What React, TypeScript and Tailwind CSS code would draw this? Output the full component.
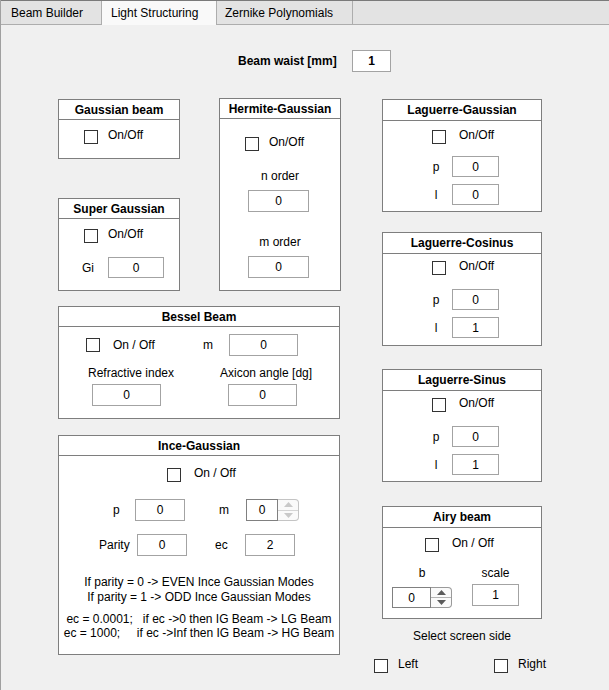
import React from "react";

function Cb() {
  return <span className="block w-[14px] h-[14px] border border-[#333333] bg-white shrink-0" />;
}

function CheckRow({ label, gap }: { label: string; gap: string }) {
  return (
    <div className="flex items-start">
      <Cb />
      <span className={`${gap} -mt-[2px] leading-[14px] whitespace-nowrap`}>{label}</span>
    </div>
  );
}

function Field({ className, value, bold }: { className: string; value: string; bold?: boolean }) {
  return (
    <div
      className={`flex items-center justify-center bg-white border border-[#a3a3a3] leading-[14px] shrink-0 ${
        bold ? "font-bold" : ""
      } ${className}`}
    >
      {value}
    </div>
  );
}

function Spinner({ value, textW, h, disabled }: { value: string; textW: string; h: string; disabled?: boolean }) {
  const arrow = disabled ? "#c9c9c9" : "#5a5a5a";
  return (
    <div className={`flex shrink-0 ${h}`}>
      <div className={`flex items-center justify-center bg-white border border-[#808080] ${textW}`}>{value}</div>
      <div
        className={`flex flex-col w-[21px] border border-l-0 rounded-r-[4px] overflow-hidden bg-[#fafafa] ${
          disabled ? "border-[#c4c4c4]" : "border-[#9a9a9a]"
        }`}
      >
        <div className={`flex-1 flex items-center justify-center border-b ${disabled ? "border-[#d4d4d4]" : "border-[#b4b4b4]"}`}>
          <svg width="9" height="5" viewBox="0 0 9 5">
            <path d="M0 5 L4.5 0 L9 5 Z" fill={arrow} />
          </svg>
        </div>
        <div className="flex-1 flex items-center justify-center">
          <svg width="9" height="5" viewBox="0 0 9 5">
            <path d="M0 0 L4.5 5 L9 0 Z" fill={arrow} />
          </svg>
        </div>
      </div>
    </div>
  );
}

function Panel({
  title,
  className,
  headerClass,
  children,
}: {
  title: string;
  className: string;
  headerClass: string;
  children?: React.ReactNode;
}) {
  return (
    <div className={`flex flex-col bg-white border border-[#7e7e7e] shrink-0 ${className}`}>
      <div className={`flex items-center justify-center font-bold border-b border-[#7e7e7e] shrink-0 ${headerClass}`}>
        {title}
      </div>
      <div className="flex-1 flex flex-col">{children}</div>
    </div>
  );
}

function LagPanel({
  title,
  className,
  headerClass,
  cbPt,
  pMt,
  lValue,
}: {
  title: string;
  className: string;
  headerClass: string;
  cbPt: string;
  pMt: string;
  lValue: string;
}) {
  return (
    <Panel title={title} className={className} headerClass={headerClass}>
      <div className={`${cbPt} pl-[49px]`}>
        <CheckRow label="On/Off" gap="ml-[13px]" />
      </div>
      <div className={`flex items-center ${pMt} pl-[49px]`}>
        <span className="w-[8px] text-center">p</span>
        <Field className="ml-[12px] w-[47px] h-[21px]" value="0" />
      </div>
      <div className="flex items-center mt-[7px] pl-[49px]">
        <span className="w-[8px] text-center">l</span>
        <Field className="ml-[12px] w-[47px] h-[21px]" value={lValue} />
      </div>
    </Panel>
  );
}

export default function App() {
  return (
    <div className="w-[609px] h-[690px] overflow-hidden bg-[#f0f0f0] border-l border-[#a0a0a0] text-[12px] text-black font-['Liberation_Sans',Arial,sans-serif]">
      {/* Tabs */}
      <div className="flex h-[25px] border-t border-[#7a7a7a] bg-[#e3e3e3]">
        <div className="flex items-center w-[101px] h-[24px] pl-[10px] border-r border-b border-[#adadad]">Beam Builder</div>
        <div className="flex items-center w-[115px] h-[24px] pl-[9px] border-r border-[#adadad] bg-[#f9f9f9]">
          Light Structuring
        </div>
        <div className="flex items-center w-[136px] h-[24px] pl-[8px] border-r border-b border-[#adadad]">
          Zernike Polynomials
        </div>
        <div className="flex-1 h-[24px] border-b border-[#adadad]" />
      </div>

      {/* Beam waist */}
      <div className="flex items-center h-[22px] mt-[25px] pl-[237px]">
        <span className="w-[114px] font-bold">Beam waist [mm]</span>
        <Field className="w-[39px] h-[22px]" value="1" bold />
      </div>

      {/* Main */}
      <div className="flex items-start mt-[26px] pl-[57px]">
        {/* Left area */}
        <div className="flex flex-col w-[283px] shrink-0">
          <div className="flex items-start">
            <div className="flex flex-col w-[122px]">
              <Panel title="Gaussian beam" className="w-[122px] h-[60px] mt-[1px]" headerClass="h-[20px]">
                <div className="pt-[10px] pl-[25px]">
                  <CheckRow label="On/Off" gap="ml-[10px]" />
                </div>
              </Panel>
              <Panel title="Super Gaussian" className="w-[122px] h-[93px] mt-[39px]" headerClass="h-[20px]">
                <div className="pt-[10px] pl-[25px]">
                  <CheckRow label="On/Off" gap="ml-[10px]" />
                </div>
                <div className="flex items-center mt-[14px] pl-[23px]">
                  <span className="w-[26px]">Gi</span>
                  <Field className="w-[56px] h-[21px]" value="0" />
                </div>
              </Panel>
            </div>
            <Panel title="Hermite-Gaussian" className="w-[122px] h-[193px] ml-[39px]" headerClass="h-[20px]">
              <div className="pt-[18px] pl-[25px]">
                <CheckRow label="On/Off" gap="ml-[10px]" />
              </div>
              <div className="mt-[18px] leading-[14px] text-center">n order</div>
              <Field className="mt-[7px] ml-[28px] w-[61px] h-[22px]" value="0" />
              <div className="mt-[23px] leading-[14px] text-center">m order</div>
              <Field className="mt-[7px] ml-[28px] w-[61px] h-[22px]" value="0" />
            </Panel>
          </div>

          <Panel title="Bessel Beam" className="w-[282px] h-[113px] mt-[15px]" headerClass="h-[20px]">
            <div className="flex items-center pt-[7px] pl-[27px]">
              <Cb />
              <span className="ml-[13px] w-[90px] leading-[14px]">On / Off</span>
              <span className="w-[26px] leading-[14px]">m</span>
              <Field className="w-[69px] h-[22px]" value="0" />
            </div>
            <div className="flex items-start mt-[10px] pl-[29px]">
              <div className="flex flex-col w-[132px]">
                <span className="leading-[14px] whitespace-nowrap">Refractive index</span>
                <Field className="mt-[4px] ml-[4px] w-[69px] h-[22px]" value="0" />
              </div>
              <div className="flex flex-col">
                <span className="leading-[14px] whitespace-nowrap">Axicon angle [dg]</span>
                <Field className="mt-[4px] ml-[8px] w-[69px] h-[22px]" value="0" />
              </div>
            </div>
          </Panel>

          <Panel title="Ince-Gaussian" className="w-[282px] h-[220px] mt-[16px]" headerClass="h-[20px]">
            <div className="pt-[12px] pl-[108px]">
              <CheckRow label="On / Off" gap="ml-[13px]" />
            </div>
            <div className="flex items-center mt-[17px] pl-[54px]">
              <span className="w-[22px]">p</span>
              <Field className="w-[50px] h-[22px]" value="0" />
              <span className="ml-[34px] w-[27px]">m</span>
              <Spinner value="0" textW="w-[32px]" h="h-[22px]" disabled />
            </div>
            <div className="flex items-center mt-[13px] pl-[40px]">
              <span className="w-[38px]">Parity</span>
              <Field className="w-[50px] h-[22px]" value="0" />
              <span className="ml-[28px] w-[30px]">ec</span>
              <Field className="w-[50px] h-[22px]" value="2" />
            </div>
            <div className="mt-[19px] leading-[15px] text-center whitespace-nowrap">
              <div>If parity = 0 -&gt; EVEN Ince Gaussian Modes</div>
              <div>If parity = 1 -&gt; ODD Ince Gaussian Modes</div>
            </div>
            <div className="mt-[7px] leading-[14px] text-center whitespace-pre">
              <div>{"ec = 0.0001;   if ec ->0 then IG Beam -> LG Beam"}</div>
              <div>{"ec = 1000;     if ec ->Inf then IG Beam -> HG Beam"}</div>
            </div>
          </Panel>
        </div>

        {/* Right column */}
        <div className="flex flex-col ml-[33px] w-[220px] shrink-0">
          <LagPanel
            title="Laguerre-Gaussian"
            className="ml-[8px] w-[160px] h-[113px] mt-[1px]"
            headerClass="h-[21px]"
            cbPt="pt-[9px]"
            pMt="mt-[12px]"
            lValue="0"
          />
          <LagPanel
            title="Laguerre-Cosinus"
            className="ml-[8px] w-[160px] h-[114px] mt-[20px]"
            headerClass="h-[21px]"
            cbPt="pt-[7px]"
            pMt="mt-[14px]"
            lValue="1"
          />
          <LagPanel
            title="Laguerre-Sinus"
            className="ml-[8px] w-[160px] h-[113px] mt-[23px]"
            headerClass="h-[21px]"
            cbPt="pt-[7px]"
            pMt="mt-[14px]"
            lValue="1"
          />
          <Panel title="Airy beam" className="ml-[8px] w-[160px] h-[113px] mt-[24px]" headerClass="h-[21px]">
            <div className="pt-[10px] pl-[42px]">
              <CheckRow label="On / Off" gap="ml-[13px]" />
            </div>
            <div className="flex items-start mt-[14px] pl-[9px]">
              <div className="flex flex-col items-center w-[60px]">
                <span className="leading-[14px]">b</span>
                <div className="mt-[7px]">
                  <Spinner value="0" textW="w-[39px]" h="h-[21px]" />
                </div>
              </div>
              <div className="flex flex-col items-center ml-[20px] w-[47px]">
                <span className="leading-[14px]">scale</span>
                <Field className="mt-[4px] w-[47px] h-[22px]" value="1" />
              </div>
            </div>
          </Panel>
          <div className="ml-[8px] w-[160px] mt-[10px] leading-[14px] text-center">Select screen side</div>
          <div className="flex items-start mt-[16px]">
            <div className="w-[120px]">
              <CheckRow label="Left" gap="ml-[10px]" />
            </div>
            <CheckRow label="Right" gap="ml-[10px]" />
          </div>
        </div>
      </div>
    </div>
  );
}
